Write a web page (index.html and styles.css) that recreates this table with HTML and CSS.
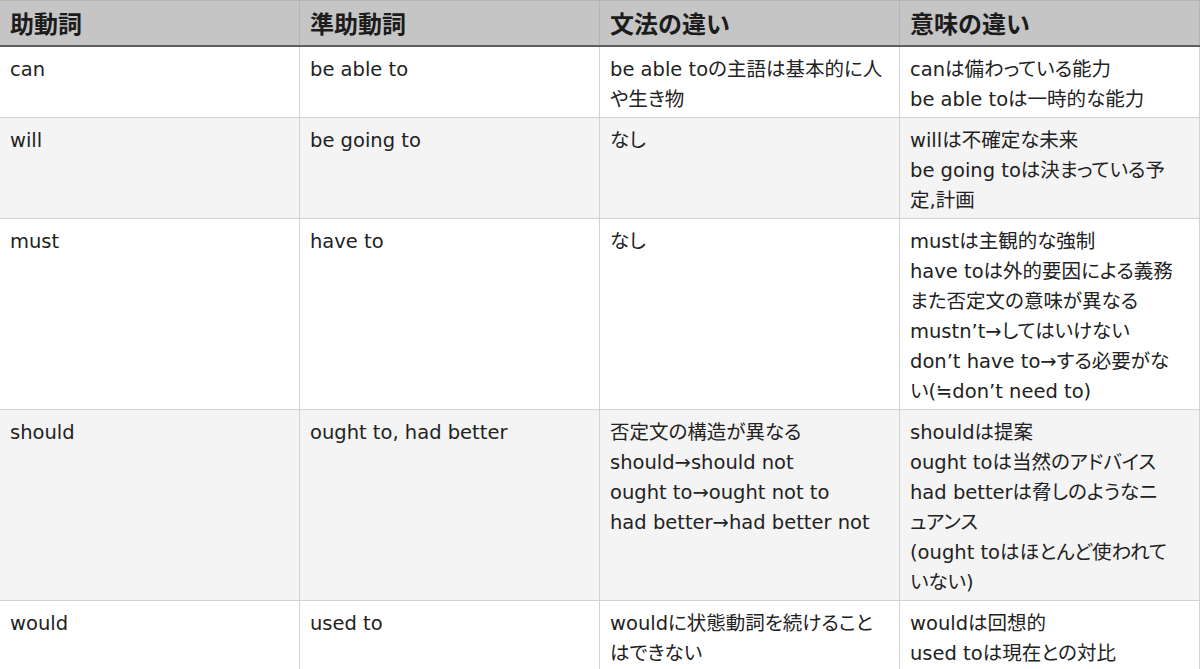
FILE: index.html
```html
<!DOCTYPE html>
<html lang="ja">
<head>
<meta charset="utf-8">
<title>助動詞と準助動詞</title>
<link rel="stylesheet" href="styles.css">
</head>
<body>
<table class="grammar">
  <colgroup>
    <col class="col"><col class="col"><col class="col"><col class="col">
  </colgroup>
  <thead>
    <tr>
      <th>助動詞</th>
      <th>準助動詞</th>
      <th>文法の違い</th>
      <th>意味の違い</th>
    </tr>
  </thead>
  <tbody>
    <tr>
      <td>can</td>
      <td>be able to</td>
      <td>be able toの主語は基本的に人<br>や生き物</td>
      <td>canは備わっている能力<br>be able toは一時的な能力</td>
    </tr>
    <tr>
      <td>will</td>
      <td>be going to</td>
      <td>なし</td>
      <td>willは不確定な未来<br>be going toは決まっている予<br>定,計画</td>
    </tr>
    <tr>
      <td>must</td>
      <td>have to</td>
      <td>なし</td>
      <td>mustは主観的な強制<br>have toは外的要因による義務<br>また否定文の意味が異なる<br>mustn’t→してはいけない<br>don’t have to→する必要がな<br>い(≒don’t need to)</td>
    </tr>
    <tr>
      <td>should</td>
      <td>ought to, had better</td>
      <td>否定文の構造が異なる<br>should→should not<br>ought to→ought not to<br>had better→had better not</td>
      <td>shouldは提案<br>ought toは当然のアドバイス<br>had betterは脅しのようなニ<br>ュアンス<br>(ought toはほとんど使われて<br>いない)</td>
    </tr>
    <tr>
      <td>would</td>
      <td>used to</td>
      <td>wouldに状態動詞を続けること<br>はできない</td>
      <td>wouldは回想的<br>used toは現在との対比</td>
    </tr>
  </tbody>
</table>
</body>
</html>
```
FILE: styles.css
```css
html, body {
  margin: 0;
  padding: 0;
  background: #ffffff;
}

body {
  font-family: "DejaVu Sans", "Noto Sans CJK JP", sans-serif;
  color: #222222;
  overflow: hidden;
}

.grammar {
  width: 1201px;
  margin-left: -1px;
  table-layout: fixed;
  border-collapse: collapse;
}

.grammar .col {
  width: 300px;
}

.grammar th {
  background: #c5c5c5;
  text-align: left;
  font-family: "Noto Sans CJK JP", sans-serif;
  font-size: 24px;
  font-weight: 700;
  line-height: 30px;
  padding: 7px 10px 7px;
  border: 1px solid #b4b4b4;
  border-bottom: 2px solid #5e5e5e;
  color: #1c1c1c;
}

.grammar td {
  font-size: 19.5px;
  line-height: 30px;
  font-feature-settings: "palt";
  vertical-align: top;
  padding: 8px 10px 2px;
  border: 1px solid #d2d2d2;
  white-space: nowrap;
}

.grammar tbody tr:nth-child(even) td {
  background: #f4f4f4;
}
```
